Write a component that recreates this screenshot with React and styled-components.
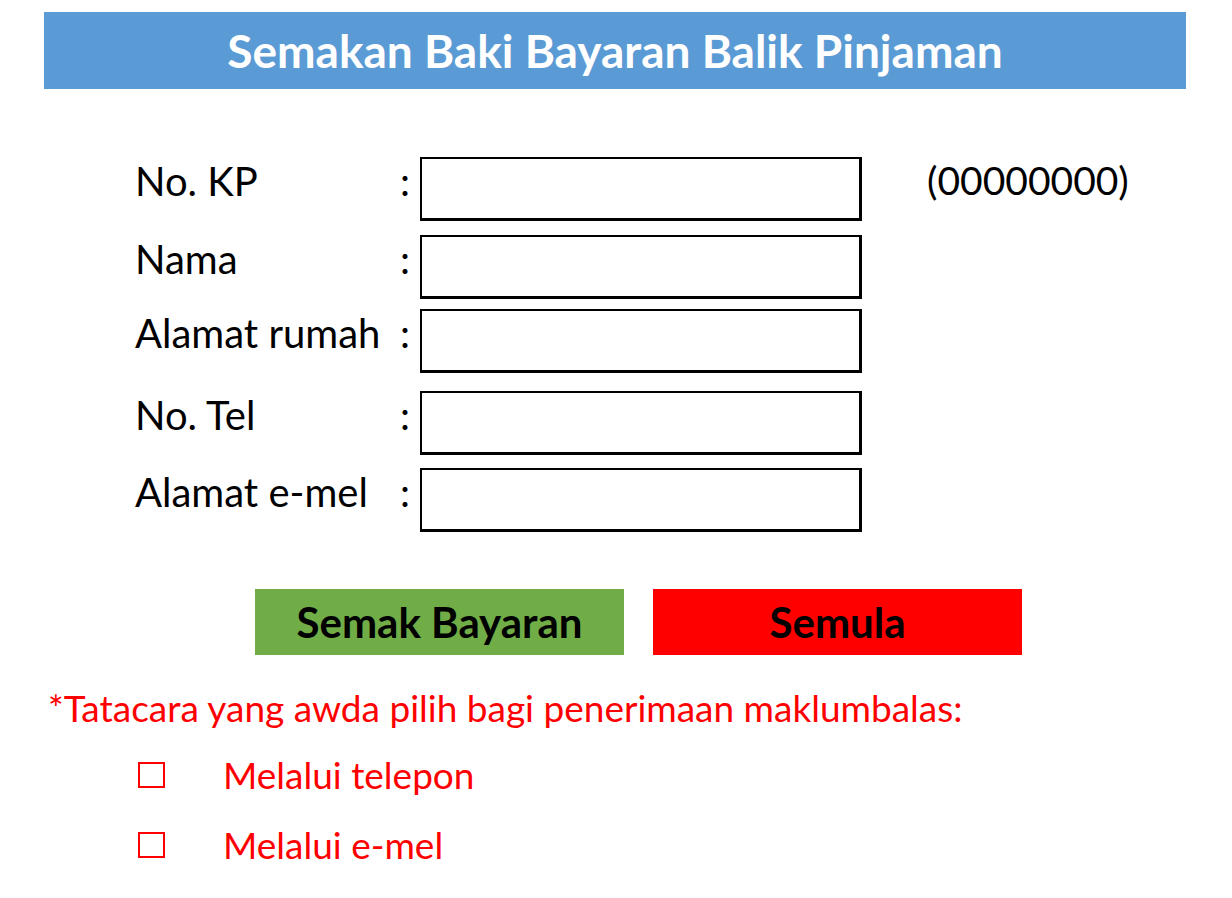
import React from "react";
import styled, { createGlobalStyle } from "styled-components";

const GlobalStyle = createGlobalStyle`
  html, body {
    margin: 0;
    padding: 0;
    background: #ffffff;
  }
  body {
    font-family: Lato, "Liberation Sans", Arial, sans-serif;
    color: #000000;
  }
`;

const Page = styled.div`
  width: 1232px;
  height: 898px;
  padding-top: 12px;
  box-sizing: border-box;
`;

const TitleBar = styled.div`
  margin: 0 46px 0 44px;
  height: 77px;
  background: #5b9bd5;
  display: flex;
  align-items: center;
  justify-content: center;
`;

const Title = styled.h1`
  margin: 0;
  font-size: 46px;
  font-weight: 700;
  color: #ffffff;
`;

const Form = styled.div`
  margin-top: 68px;
  padding-left: 135px;
  display: flex;
  flex-direction: column;
`;

const Row = styled.div`
  display: flex;
  align-items: flex-start;
  height: 64px;
  margin-top: ${(p) => p.$gap || 0}px;
  font-size: 40px;
`;

const Label = styled.div`
  width: 265px;
  white-space: nowrap;
`;

const Colon = styled.div`
  width: 20px;
`;

const Field = styled.div`
  width: 442px;
  height: 64px;
  box-sizing: border-box;
  border: 2px solid #000000;
  border-right-width: 3px;
  border-bottom-width: 3px;
  flex-shrink: 0;
`;

const Hint = styled.div`
  margin-left: 65px;
  font-size: 39px;
`;

const Buttons = styled.div`
  margin-top: 57px;
  display: flex;
  gap: 29px;
  padding-left: 255px;
`;

const Button = styled.div`
  width: 369px;
  height: 66px;
  background: ${(p) => p.$bg};
  display: flex;
  align-items: center;
  justify-content: center;
  font-size: 42px;
  font-weight: 700;
  color: #000000;
`;

const Note = styled.div`
  margin: 30px 0 0 48px;
  font-size: 37px;
  color: #ff0000;
`;

const Options = styled.div`
  margin-top: 22px;
  padding-left: 138px;
  display: flex;
  flex-direction: column;
  gap: 25px;
`;

const Option = styled.div`
  display: flex;
  align-items: center;
  font-size: 37px;
  color: #ff0000;
`;

const Box = styled.span`
  width: 27px;
  height: 26px;
  box-sizing: border-box;
  border: 2px solid #ff0000;
  margin-right: 58px;
`;

const fields = [
  { label: "No. KP", gap: 0, hint: "(00000000)" },
  { label: "Nama", gap: 14 },
  { label: "Alamat rumah", gap: 10 },
  { label: "No. Tel", gap: 18 },
  { label: "Alamat e-mel", gap: 13 },
];

export default function App() {
  return (
    <Page>
      <GlobalStyle />
      <TitleBar>
        <Title>Semakan Baki Bayaran Balik Pinjaman</Title>
      </TitleBar>

      <Form>
        {fields.map((f) => (
          <Row key={f.label} $gap={f.gap}>
            <Label>{f.label}</Label>
            <Colon>:</Colon>
            <Field />
            {f.hint ? <Hint>{f.hint}</Hint> : null}
          </Row>
        ))}
      </Form>

      <Buttons>
        <Button $bg="#70ad47">Semak Bayaran</Button>
        <Button $bg="#ff0000">Semula</Button>
      </Buttons>

      <Note>*Tatacara yang awda pilih bagi penerimaan maklumbalas:</Note>

      <Options>
        <Option>
          <Box />
          Melalui telepon
        </Option>
        <Option>
          <Box />
          Melalui e-mel
        </Option>
      </Options>
    </Page>
  );
}
